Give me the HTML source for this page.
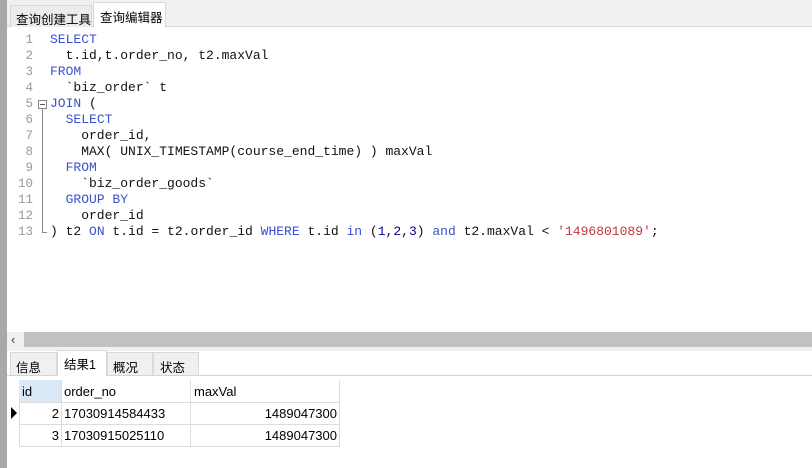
<!DOCTYPE html><html><head><meta charset="utf-8"><style>
*{margin:0;padding:0;box-sizing:border-box}
body{width:812px;height:468px;overflow:hidden;background:#fff;position:relative;font-family:"Liberation Sans","Noto Sans CJK SC",sans-serif;font-size:12px;color:#000}
.abs{position:absolute;white-space:nowrap}
.code{font-family:"Liberation Mono","Courier New",monospace;font-size:13px;line-height:16px;white-space:pre;color:#111}
.ln{color:#999;text-align:right;width:33px;font-family:"Liberation Mono",monospace;font-size:12.5px;line-height:16px;white-space:pre}
.k{color:#3c4fd0}.s{color:#c4343f}.n{color:#00008b}
.t{font-size:12.5px}
</style></head><body>
<div class="abs" style="left:0;top:0;width:7px;height:468px;background:#a8a8a8"></div>
<div class="abs" style="left:7px;top:0;width:805px;height:27px;background:#f0f0f0;border-bottom:1px solid #d9d9d9"></div>
<div class="abs t" style="left:10px;top:5px;width:82px;height:22px;background:#ececec;border:1px solid #d9d9d9;border-bottom:none;padding:3px 0 0 5px">查询创建工具</div>
<div class="abs t" style="left:93px;top:2px;width:73px;height:26px;background:#fff;border:1px solid #d9d9d9;border-bottom:none;padding:4px 0 0 6px">查询编辑器</div>
<div class="abs ln" style="left:0;top:32px">1
2
3
4
5
6
7
8
9
10
11
12
13</div>
<div class="abs" style="left:38px;top:100px;width:9px;height:9px;border:1px solid #888;background:#fff"></div>
<div class="abs" style="left:40px;top:104px;width:5px;height:1px;background:#555"></div>
<div class="abs" style="left:42px;top:109px;width:1px;height:123px;background:#888"></div>
<div class="abs" style="left:42px;top:232px;width:5px;height:1px;background:#888"></div>
<div class="abs code" style="left:50px;top:32px"><span class="k">SELECT</span>
  t.id,t.order_no, t2.maxVal
<span class="k">FROM</span>
  `biz_order` t
<span class="k">JOIN</span> (
  <span class="k">SELECT</span>
    order_id,
    MAX( UNIX_TIMESTAMP(course_end_time) ) maxVal
  <span class="k">FROM</span>
    `biz_order_goods`
  <span class="k">GROUP BY</span>
    order_id
) t2 <span class="k">ON</span> t.id = t2.order_id <span class="k">WHERE</span> t.id <span class="k">in</span> (<span class="n">1</span>,<span class="n">2</span>,<span class="n">3</span>) <span class="k">and</span> t2.maxVal &lt; <span class="s">'1496801089'</span>;</div>
<div class="abs" style="left:7px;top:332px;width:805px;height:15px;background:#f0f0f0"></div>
<div class="abs" style="left:24px;top:332px;width:788px;height:15px;background:#c1c1c1"></div>
<div class="abs" style="left:11px;top:332px;font-size:13px;line-height:15px;color:#444">&lsaquo;</div>
<div class="abs" style="left:7px;top:347px;width:805px;height:4px;background:#f0f0f0"></div>
<div class="abs" style="left:7px;top:375px;width:805px;height:1px;background:#d4d4d4"></div>
<div class="abs t" style="left:10px;top:352px;width:47px;height:23px;background:#f0f0f0;border:1px solid #d9d9d9;border-bottom:none;padding:4px 0 0 5px">信息</div>
<div class="abs t" style="left:57px;top:350px;width:50px;height:26px;background:#fff;border:1px solid #d9d9d9;border-bottom:none;padding:3px 0 0 6px">结果1</div>
<div class="abs t" style="left:107px;top:352px;width:46px;height:23px;background:#f0f0f0;border:1px solid #d9d9d9;border-bottom:none;padding:4px 0 0 5px">概况</div>
<div class="abs t" style="left:153px;top:352px;width:46px;height:23px;background:#f0f0f0;border:1px solid #d9d9d9;border-bottom:none;padding:4px 0 0 6px">状态</div>
<div class="abs" style="left:19px;top:380px;width:42px;height:23px;background:#dbe8f5"></div>
<div class="abs" style="left:19px;top:380px;width:321px;height:67px;border-right:1px solid #ddd;border-bottom:1px solid #ddd"></div>
<div class="abs" style="left:19px;top:402px;width:321px;height:1px;background:#ddd"></div>
<div class="abs" style="left:19px;top:424px;width:321px;height:1px;background:#ddd"></div>
<div class="abs" style="left:61px;top:380px;width:1px;height:67px;background:#ddd"></div>
<div class="abs" style="left:190px;top:380px;width:1px;height:67px;background:#ddd"></div>
<div class="abs" style="left:19px;top:403px;width:1px;height:44px;background:#ddd"></div>
<div class="abs" style="left:22px;top:384px;font-size:13px">id</div>
<div class="abs" style="left:64px;top:384px;font-size:13px">order_no</div>
<div class="abs" style="left:194px;top:384px;font-size:13px">maxVal</div>
<div class="abs" style="left:11px;top:407px;width:0;height:0;border-left:6px solid #000;border-top:6px solid transparent;border-bottom:6px solid transparent"></div>
<div class="abs" style="left:19px;top:406px;width:40px;text-align:right;font-size:13px">2</div>
<div class="abs" style="left:64px;top:406px;font-size:13px">17030914584433</div>
<div class="abs" style="left:190px;top:406px;width:147px;text-align:right;font-size:13px">1489047300</div>
<div class="abs" style="left:19px;top:428px;width:40px;text-align:right;font-size:13px">3</div>
<div class="abs" style="left:64px;top:428px;font-size:13px">17030915025110</div>
<div class="abs" style="left:190px;top:428px;width:147px;text-align:right;font-size:13px">1489047300</div>
</body></html>
